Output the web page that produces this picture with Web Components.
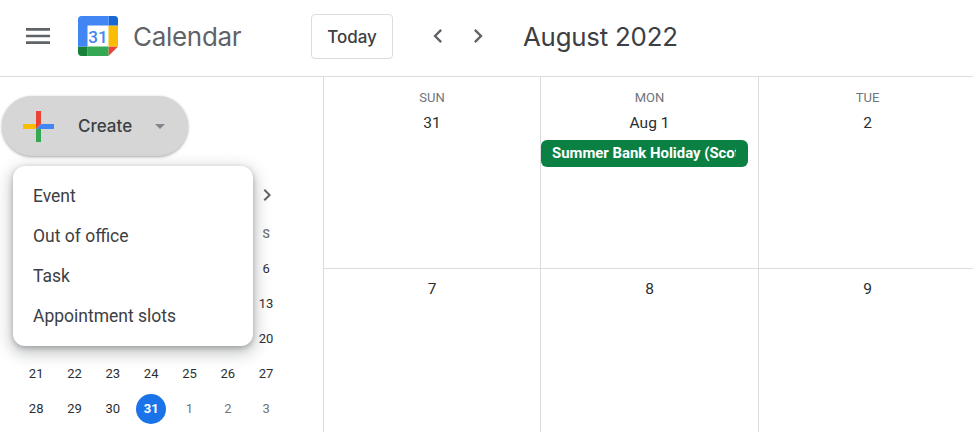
<!DOCTYPE html>
<html>
<head>
<meta charset="utf-8">
<title>Calendar</title>
<style>
    html, body { margin: 0; height: 100%; overflow: hidden; background: #fff; }
</style>
</head>
<body>
<cal-app></cal-app>
<script>
const chevron = (dir, color, size) => `
    <svg width="${size}" height="${size}" viewBox="0 0 24 24" fill="${color}">
        <path d="${dir === 'left' ? 'M15.41 7.41 14 6l-6 6 6 6 1.41-1.41L10.83 12z' : 'M8.59 16.59 10 18l6-6-6-6-1.41 1.41L13.17 12z'}"/>
    </svg>`

class CalHeader extends HTMLElement {
    constructor() {
        super()
        this._shadowDom = this.attachShadow({ mode: 'open' })
    }

    connectedCallback() {
        this._shadowDom.innerHTML = `
            <style>
                :host{
                    display: flex;
                    align-items: center;
                    height: 72px;
                    padding-bottom: 4px;
                    border-bottom: 1px solid #dadce0;
                    box-sizing: content-box;
                    color: #3c4043;
                }
                .menu{
                    display: flex;
                    margin-left: 22px;
                }
                .logo{
                    display: block;
                    margin-left: 24px;
                }
                .name{
                    margin-left: 15px;
                    width: 178px;
                    font-family: Inter, sans-serif;
                    font-size: 26px;
                    letter-spacing: -0.3px;
                    color: #5f6368;
                }
                .today{
                    box-sizing: border-box;
                    width: 82px;
                    height: 45px;
                    margin-top: 1px;
                    display: flex;
                    align-items: center;
                    justify-content: center;
                    border: 1px solid #dadce0;
                    border-radius: 4px;
                    font-family: Inter, sans-serif;
                    font-size: 17px;
                    font-weight: 500;
                }
                .nav{
                    display: flex;
                    gap: 12px;
                    margin-left: 31px;
                    width: 99px;
                }
                .nav svg{ display: block; }
                .title{
                    font-family: Inter, sans-serif;
                    font-size: 25.8px;
                    letter-spacing: -0.2px;
                    color: #3c4043;
                }
            </style>
            <div class="menu">
                <svg width="32" height="32" viewBox="0 0 24 24" fill="#5f6368"><path d="M3 18h18v-2H3v2zm0-5h18v-2H3v2zm0-7v2h18V6H3z"/></svg>
            </div>
            <svg class="logo" width="40" height="40" viewBox="0 0 40 40">
                <path d="M30.5 9.5H9.5V30.5H30.5z" fill="#fff"/>
                <path d="M30.5 40 40 30.5H30.5z" fill="#ea4335"/>
                <path d="M40 9.5H30.5V30.5H40z" fill="#fbbc04"/>
                <path d="M30.5 30.5H9.5V40H30.5z" fill="#34a853"/>
                <path d="M0 30.5V36.8C0 38.6 1.4 40 3.2 40H9.5V30.5z" fill="#188038"/>
                <path d="M40 9.5V3.2C40 1.4 38.6 0 36.8 0H30.5V9.5z" fill="#1967d2"/>
                <path d="M30.5 0H3.2C1.4 0 0 1.4 0 3.2V30.5H9.5V9.5H30.5z" fill="#4285f4"/>
                <text x="20" y="26.5" text-anchor="middle" font-family="Roboto, sans-serif" font-size="17" font-weight="500" fill="#4285f4">31</text>
            </svg>
            <div class="name">Calendar</div>
            <div class="today">Today</div>
            <div class="nav">${chevron('left', '#5f6368', 28)}${chevron('right', '#5f6368', 28)}</div>
            <div class="title">August 2022</div>
        `
    }
}

class CreateButton extends HTMLElement {
    constructor() {
        super()
        this._shadowDom = this.attachShadow({ mode: 'open' })
    }

    connectedCallback() {
        this._shadowDom.innerHTML = `
            <style>
                :host{
                    display: flex;
                    align-items: center;
                    box-sizing: border-box;
                    width: 186px;
                    height: 60px;
                    border-radius: 30px;
                    background: #d6d6d6;
                    box-shadow: 0 1px 3px rgba(60,64,67,.45);
                    color: #3c4043;
                }
                svg{ display: block; }
                .plus{ margin-left: 21px; }
                .label{
                    margin-left: 24px;
                    margin-bottom: 1px;
                    width: 77px;
                    font-family: Inter, sans-serif;
                    font-size: 17px;
                    font-weight: 500;
                }
            </style>
            <svg class="plus" width="31" height="31" viewBox="0 0 31 31">
                <path d="M13 0h5v13h-5z" fill="#ea4335"/>
                <path d="M18 13h13v5H18z" fill="#4285f4"/>
                <path d="M13 18h5v13h-5z" fill="#34a853"/>
                <path d="M0 13h13v5H0z" fill="#fbbc04"/>
                <path d="M13 13h5l-5 5z" fill="#ea4335"/>
                <path d="M18 13v5h-5z" fill="#4285f4"/>
            </svg>
            <div class="label">Create</div>
            <svg width="10" height="5" viewBox="0 0 10 5"><path d="M0 0h10L5 5z" fill="#80868b"/></svg>
        `
    }
}

class CreateMenu extends HTMLElement {
    constructor() {
        super()
        this._shadowDom = this.attachShadow({ mode: 'open' })
    }

    connectedCallback() {
        const items = ['Event', 'Out of office', 'Task', 'Appointment slots']
        this._shadowDom.innerHTML = `
            <style>
                :host{
                    position: absolute;
                    left: 13px;
                    top: 166px;
                    display: block;
                    box-sizing: border-box;
                    width: 240px;
                    height: 180px;
                    padding: 10px 0;
                    background: #fff;
                    border-radius: 12px;
                    box-shadow: 0 5px 16px 2px rgba(60,64,67,.32), 0 2px 5px rgba(60,64,67,.3);
                    z-index: 2;
                }
                .item{
                    height: 40px;
                    line-height: 40px;
                    padding-left: 20px;
                    font-family: Roboto, sans-serif;
                    font-size: 17.5px;
                    color: #3c4043;
                }
            </style>
            ${items.map(i => `<div class="item">${i}</div>`).join('')}
        `
    }
}

class MiniMonth extends HTMLElement {
    constructor() {
        super()
        this._shadowDom = this.attachShadow({ mode: 'open' })
    }

    connectedCallback() {
        // cells under the open menu are left empty, they can't be seen anyway
        const days = ['', '', '', '', '', '', 'S']
        const rows = [
            ['', '', '', '', '', '', 6],
            ['', '', '', '', '', '', 13],
            ['', '', '', '', '', '', 20],
            [21, 22, 23, 24, 25, 26, 27],
            [28, 29, 30, 31, 1, 2, 3]
        ]
        const cell = (txt, r, c) => {
            const next = r === 4 && c > 3
            const today = r === 4 && c === 3
            return `<div class="cell ${next ? 'other' : ''}"><span class="${today ? 'today' : ''}">${txt}</span></div>`
        }
        this._shadowDom.innerHTML = `
            <style>
                :host{
                    display: block;
                    margin-left: 17px;
                    width: 268px;
                    color: #2b2e31;
                    font-family: Roboto, sans-serif;
                    font-size: 13px;
                    font-weight: 400;
                }
                .top{
                    display: flex;
                    justify-content: flex-end;
                    height: 24px;
                    margin-bottom: 9px;
                    margin-right: 6px;
                }
                .grid{
                    display: grid;
                    grid-template-columns: repeat(7, 38.33px);
                    grid-auto-rows: 35px;
                }
                .cell{
                    display: flex;
                    align-items: center;
                    justify-content: center;
                }
                .head{
                    color: #70757a;
                    font-size: 12px;
                    font-weight: 500;
                }
                .other{ color: #70757a; }
                .today{
                    display: flex;
                    align-items: center;
                    justify-content: center;
                    width: 30px;
                    height: 30px;
                    border-radius: 50%;
                    background: #1a73e8;
                    color: #fff;
                    font-weight: 700;
                }
            </style>
            <div class="top">${chevron('right', '#5f6368', 24)}</div>
            <div class="grid">
                ${days.map(d => `<div class="cell head">${d}</div>`).join('')}
                ${rows.map((row, r) => row.map((d, c) => cell(d, r, c)).join('')).join('')}
            </div>
        `
    }
}

class CalSidebar extends HTMLElement {
    constructor() {
        super()
        this._shadowDom = this.attachShadow({ mode: 'open' })
    }

    connectedCallback() {
        this._shadowDom.innerHTML = `
            <style>
                :host{
                    display: block;
                    flex: none;
                    box-sizing: content-box;
                    width: 323px;
                    border-right: 1px solid #dadce0;
                }
                create-button{ margin: 19px 0 27px 2px; }
            </style>
            <create-button></create-button>
            <mini-month></mini-month>
            <create-menu></create-menu>
        `
    }
}

class DayCell extends HTMLElement {
    constructor() {
        super()
        this._shadowDom = this.attachShadow({ mode: 'open' })
    }

    connectedCallback() {
        const dow = this.getAttribute('dow')
        this._shadowDom.innerHTML = `
            <style>
                :host{
                    display: block;
                    box-sizing: border-box;
                    border-right: 1px solid #dadce0;
                    border-bottom: 1px solid #dadce0;
                    color: #2b2e31;
                    font-family: Roboto, sans-serif;
                    text-align: center;
                    min-width: 0;
                }
                .dow{
                    height: 17px;
                    margin-top: 12px;
                    line-height: 17px;
                    font-size: 13px;
                    font-weight: 400;
                    color: #70757a;
                }
                .date{
                    height: 20px;
                    line-height: 20px;
                    font-size: 15.5px;
                    font-weight: 400;
                    margin-top: 10px;
                }
                .dow + .date{ margin-top: 7px; }
                .events{
                    margin: 7px 10px 0 0;
                }
            </style>
            ${dow ? `<div class="dow">${dow}</div>` : ''}
            <div class="date">${this.getAttribute('date')}</div>
            <div class="events"><slot></slot></div>
        `
    }
}

class EventChip extends HTMLElement {
    constructor() {
        super()
        this._shadowDom = this.attachShadow({ mode: 'open' })
    }

    connectedCallback() {
        this._shadowDom.innerHTML = `
            <style>
                :host{
                    display: block;
                    box-sizing: border-box;
                    height: 27px;
                    padding: 0 12px 0 11px;
                    background: #0b8043;
                    border-radius: 6px;
                    color: #fff;
                    font-family: Roboto, sans-serif;
                    font-size: 14.9px;
                    font-weight: 700;
                    line-height: 26px;
                    text-align: left;
                }
                .txt{
                    overflow: hidden;
                    white-space: nowrap;
                }
            </style>
            <div class="txt"><slot></slot></div>
        `
    }
}

class WeekGrid extends HTMLElement {
    constructor() {
        super()
        this._shadowDom = this.attachShadow({ mode: 'open' })
    }

    connectedCallback() {
        this._shadowDom.innerHTML = `
            <style>
                :host{
                    display: grid;
                    grid-template-columns: 217px 218px 218px;
                    grid-template-rows: 192px 192px;
                    flex: none;
                }
            </style>
            <slot></slot>
        `
    }
}

class CalApp extends HTMLElement {
    constructor() {
        super()
        this._shadowDom = this.attachShadow({ mode: 'open' })
    }

    connectedCallback() {
        this._shadowDom.innerHTML = `
            <style>
                :host{
                    display: block;
                    position: relative;
                    width: 973px;
                    height: 432px;
                    overflow: hidden;
                }
                .body{
                    display: flex;
                }
            </style>
            <cal-header></cal-header>
            <div class="body">
                <cal-sidebar></cal-sidebar>
                <week-grid>
                    <day-cell dow="SUN" date="31"></day-cell>
                    <day-cell dow="MON" date="Aug 1"><event-chip>Summer Bank Holiday (Scotland)</event-chip></day-cell>
                    <day-cell dow="TUE" date="2"></day-cell>
                    <day-cell date="7"></day-cell>
                    <day-cell date="8"></day-cell>
                    <day-cell date="9"></day-cell>
                </week-grid>
            </div>
        `
    }
}

window.customElements.define('cal-header', CalHeader)
window.customElements.define('create-button', CreateButton)
window.customElements.define('create-menu', CreateMenu)
window.customElements.define('mini-month', MiniMonth)
window.customElements.define('cal-sidebar', CalSidebar)
window.customElements.define('event-chip', EventChip)
window.customElements.define('day-cell', DayCell)
window.customElements.define('week-grid', WeekGrid)
window.customElements.define('cal-app', CalApp)
</script>
</body>
</html>
